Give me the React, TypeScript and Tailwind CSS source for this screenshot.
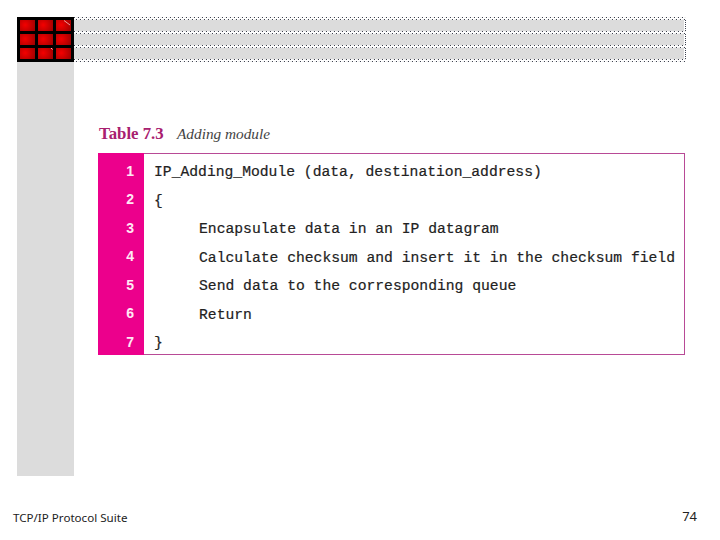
import React from 'react';

const rows = [
  { n: 1, text: 'IP_Adding_Module (data, destination_address)', indent: false },
  { n: 2, text: '{', indent: false },
  { n: 3, text: 'Encapsulate data in an IP datagram', indent: true },
  { n: 4, text: 'Calculate checksum and insert it in the checksum field', indent: true },
  { n: 5, text: 'Send data to the corresponding queue', indent: true },
  { n: 6, text: 'Return', indent: true },
  { n: 7, text: '}', indent: false },
];

// two staggered rows of single pixel dots
const DotRow = () => (
  <div className="h-[3px] flex flex-col justify-between">
    <div className="h-px bg-[repeating-linear-gradient(90deg,#3f4350_0_1px,#ffffff_1px_2px,#f0f0f0_2px_4px)]" />
    <div className="h-px bg-[repeating-linear-gradient(90deg,#f0f0f0_0_2px,#3f4350_2px_3px,#ffffff_3px_4px)]" />
  </div>
);

const Band = ({ h }: { h: string }) => (
  <div className={`${h} bg-[#dcdcdc] mr-[2px] border-r-0 relative`}>
    <span className="absolute top-0 bottom-0 right-[-2px] w-[1px] border-r border-dotted border-[#3f4350]" />
  </div>
);

const App: React.FC = () => {
  return (
    <div className="w-[720px] h-[540px] bg-white flex flex-col overflow-hidden font-['Liberation_Sans',sans-serif]">
      <div className="flex pl-[17px] pt-[17px] h-[476px]">
        {/* Left column with logo */}
        <div className="w-[57px] bg-[#dcdcdc] shrink-0">
          <div className="grid grid-cols-3 gap-[3px] p-[3px] bg-black h-[45px]">
            {Array.from({ length: 9 }).map((_, i) => (
              <div key={i} className="relative bg-[radial-gradient(circle_at_35%_45%,#f40000,#9c0000)]">
                {i === 2 && (
                  <svg className="absolute inset-0 w-full h-full" viewBox="0 0 15 11">
                    <path d="M8 0.5 L14 5" stroke="#f4c8c8" strokeWidth="0.8" fill="none" />
                  </svg>
                )}
                {i === 7 && (
                  <svg className="absolute inset-0 w-full h-full" viewBox="0 0 15 11">
                    <path d="M13 0 L14.5 1.5" stroke="#f4d8d8" strokeWidth="0.9" fill="none" />
                  </svg>
                )}
              </div>
            ))}
          </div>
        </div>

        <div className="flex-1 flex flex-col">
          {/* Dotted banner */}
          <div className="w-[612px] h-[45px] flex flex-col justify-between">
            <DotRow />
            <Band h="h-[11px]" />
            <DotRow />
            <Band h="h-[11px]" />
            <DotRow />
            <Band h="h-[11px]" />
            <DotRow />
          </div>

          {/* Table */}
          <div className="pl-[24px] pt-[59px]">
            <div className="flex items-baseline h-[33px] font-['Liberation_Serif',serif]">
              <span className="text-[16.8px] font-bold text-[#a8206f] w-[79px] pl-px">Table 7.3</span>
              <span className="text-[15.3px] italic text-[#444444]">Adding module</span>
            </div>
            <div className="w-[587px] h-[202px] border border-[#b84a96] border-l-0 flex mt-[-1px]">
              <div className="w-[46px] bg-[#ec008c] flex flex-col pt-[4px] mt-[-1px] mb-[-1px]">
                {rows.map((r) => (
                  <div key={r.n} className="h-[28.5px] shrink-0 flex items-center justify-end pr-[10px] text-[14px] font-bold text-[#ffe8f4]">
                    {r.n}
                  </div>
                ))}
              </div>
              <div className="flex-1 flex flex-col pt-[4px] pl-[10px] font-['Liberation_Mono',monospace] text-[14.7px] text-[#222222] [-webkit-text-stroke:0.2px_#222222]">
                {rows.map((r) => (
                  <div key={r.n} className={`h-[28.5px] shrink-0 flex items-center whitespace-pre ${r.indent ? 'pl-[45px]' : ''}`}>
                    {r.text}
                  </div>
                ))}
              </div>
            </div>
          </div>
        </div>
      </div>

      {/* Footer */}
      <div className="flex justify-between pl-[13px] pr-[23px] pt-[34px] text-[#222222] font-['Noto_Sans',sans-serif]">
        <span className="text-[11.6px] leading-[16px]">TCP/IP Protocol Suite</span>
        <span className="text-[13px] leading-[16px] mt-[-2px]">74</span>
      </div>
    </div>
  );
};

export default App;
